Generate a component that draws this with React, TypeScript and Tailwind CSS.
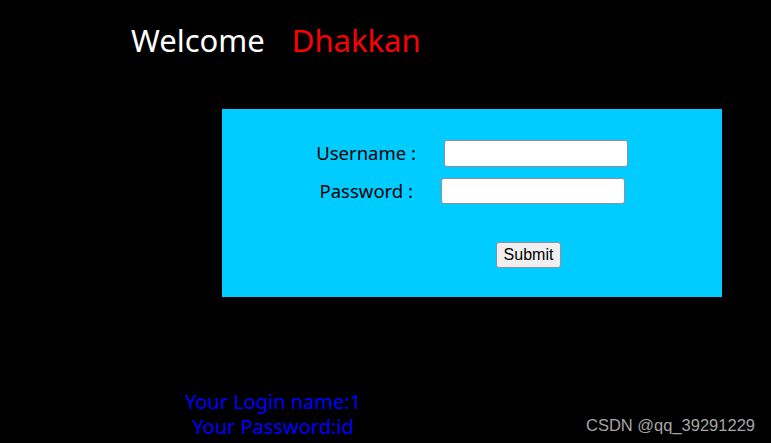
export default function App() {
  return (
    <div className="relative w-[771px] h-[443px] bg-black overflow-hidden font-['Noto_Sans',sans-serif]">
      <div className="flex gap-[27px] pl-[131px] pt-[18px] h-[62px] text-[31px] leading-[44px]">
        <span className="text-white">Welcome</span>
        <span className="text-[#ff0000]">Dhakkan</span>
      </div>

      <div className="ml-[222px] mt-[47px] w-[500px] h-[188px] bg-[#00ccff] pt-[31px]">
        <div className="flex items-center h-[26px]">
          <span className="w-[194px] text-right text-[18.5px] text-black">Username :</span>
          <input type="text" className="ml-[28px] w-[184px] h-[27px] bg-white border border-[#8f8f9d] rounded-[3px]" />
        </div>
        <div className="flex items-center h-[26px] mt-[12px]">
          <span className="w-[191px] text-right text-[18.5px] text-black">Password :</span>
          <input type="password" className="ml-[28px] w-[184px] h-[26px] bg-white border border-[#8f8f9d] rounded-[3px]" />
        </div>
        <div className="flex mt-[38px] pl-[274px]">
          <button className="w-[65px] h-[26px] bg-[#efefef] border border-[#8f8f9d] rounded-[3px] text-[16px] font-['Liberation_Sans',sans-serif] text-black leading-none">
            Submit
          </button>
        </div>
      </div>

      <div className="mt-[92px] ml-[173px] w-[200px] flex flex-col items-center text-[20px] leading-[25px] text-[#0000ff]">
        <span>Your Login name:1</span>
        <span>Your Password:id</span>
      </div>

      <span className="absolute right-[16px] bottom-[10px] text-[16.5px] leading-none text-[#a6a6a6] font-['Liberation_Sans',sans-serif]">
        CSDN @qq_39291229
      </span>
    </div>
  );
}
